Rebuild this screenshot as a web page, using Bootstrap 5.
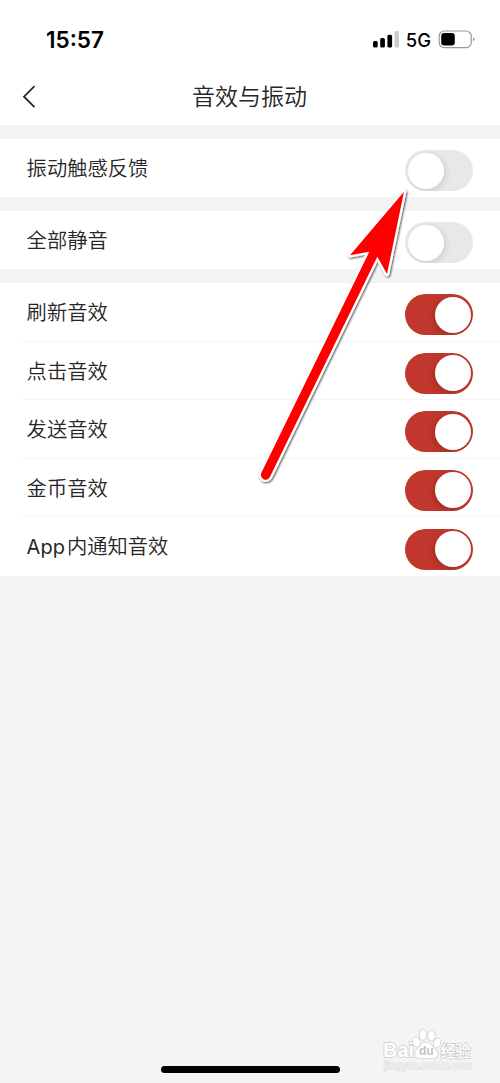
<!DOCTYPE html>
<html lang="zh-CN">
<head>
<meta charset="utf-8">
<meta name="viewport" content="width=device-width, initial-scale=1">
<title>音效与振动</title>
<link href="https://cdn.jsdelivr.net/npm/bootstrap@5.3.0/dist/css/bootstrap.min.css" rel="stylesheet">
<style>
body{background:#f4f4f4;color:#262626;font-family:Inter,"Noto Sans CJK SC",sans-serif;}
.screen{width:500px;height:1083px;overflow:hidden;}
.statusbar{height:67px;padding:26px 25px 0 46px;color:#000;}
.clock{font:600 22.5px/27px Inter,sans-serif;}
.network{font:500 18.5px/27px Inter,sans-serif;margin:1px 7px 0 7px;}
.titlebar{height:58px;}
.titlebar h1{font:350 23px/56px "Noto Sans CJK SC",sans-serif;margin:0 1px 0 0;}
.back{left:22px;top:17px;}
.groups{gap:14px;padding-top:14px;}
.setting{height:58px;padding:0 27px;font-weight:350;font-size:20.3px;}
.multi .setting{height:58.6px;}
.multi .setting:not(:last-child){background:linear-gradient(#f6f6f6,#f6f6f6) 22px 100%/100% 1px no-repeat;}
.label-text{line-height:60px;margin-left:-.4px;}
.latin{font-weight:400;font-size:20px;margin-right:2px;}
.toggle{width:68px;height:41px;margin-top:11.2px;border-radius:21px;background:#e8e8e8;padding:2.5px;overflow:hidden;}
.toggle::before{content:"";width:36px;height:36px;border-radius:50%;background:#fff;box-shadow:2px 2px 6px rgba(0,0,0,.12);}
.toggle.on{background:#c2372d;justify-content:flex-end;}
.toggle.on::before{box-shadow:-2px 2px 6px rgba(0,0,0,.16);}
.pointer{left:240px;top:180px;}
.home{width:179px;height:7px;left:161px;top:1066px;background:#000;}
.watermark{left:378px;top:1024px;}
</style>
</head>
<body>
<main class="screen position-relative">
  <header class="bg-white">
    <div class="statusbar d-flex align-items-start">
      <span class="clock me-auto">15:57</span>
      <svg width="27" height="27" viewBox="0 0 27 27"><rect x="1" y="15" width="4.7" height="6.5" rx="1.5"/><rect x="8.2" y="12" width="4.7" height="9.5" rx="1.5"/><rect x="15.4" y="8.7" width="4.7" height="12.8" rx="1.5"/><rect x="22.5" y="5" width="4.5" height="16.5" rx="1.5" fill="#ccc"/></svg>
      <span class="network">5G</span>
      <svg width="37" height="27" viewBox="0 0 37 27"><rect x="1.2" y="5" width="32" height="16.6" rx="5" fill="none" stroke="#999" stroke-width="1.2"/><rect x="3.2" y="7" width="13.6" height="12.5" rx="3"/><path d="M35 11Q38 13.3 35 15.6Z" fill="#999"/></svg>
    </div>
    <div class="titlebar position-relative text-center">
      <svg class="back position-absolute" width="16" height="26" viewBox="0 0 16 26" fill="none" stroke="#262626" stroke-width="1.8"><path d="M12.5 2.2 2 12.7 12.5 23.2"/></svg>
      <h1>音效与振动</h1>
    </div>
  </header>
  <div class="groups d-flex flex-column">
    <section class="bg-white"><div class="setting d-flex justify-content-between"><span class="label-text">振动触感反馈</span><span class="toggle d-flex"></span></div></section>
    <section class="bg-white"><div class="setting d-flex justify-content-between"><span class="label-text">全部静音</span><span class="toggle d-flex"></span></div></section>
    <section class="multi bg-white">
      <div class="setting d-flex justify-content-between"><span class="label-text">刷新音效</span><span class="toggle on d-flex"></span></div>
      <div class="setting d-flex justify-content-between"><span class="label-text">点击音效</span><span class="toggle on d-flex"></span></div>
      <div class="setting d-flex justify-content-between"><span class="label-text">发送音效</span><span class="toggle on d-flex"></span></div>
      <div class="setting d-flex justify-content-between"><span class="label-text">金币音效</span><span class="toggle on d-flex"></span></div>
      <div class="setting d-flex justify-content-between"><span class="label-text"><span class="latin">App</span>内通知音效</span><span class="toggle on d-flex"></span></div>
    </section>
  </div>
  <svg class="pointer position-absolute" width="180" height="320" viewBox="0 0 180 320">
    <defs><filter id="shade" x="-20%" y="-20%" width="140%" height="140%"><feDropShadow dx="1" dy="1" stdDeviation="1" flood-color="#000" flood-opacity=".7"/></filter></defs>
    <path d="M164 11.7 110 75.3 129.3 71.7 21.4 292.8A4.7 4.7 0 0 0 29.9 297L137.3 76.7 147 94Z" fill="#f00" stroke="#fff" stroke-width="4.6" stroke-linejoin="round" paint-order="stroke" filter="url(#shade)"/>
  </svg>
  <svg class="watermark position-absolute" width="105" height="52" viewBox="0 0 105 52">
    <g fill="#fff" stroke="#cfcfcf" stroke-width="1.6" paint-order="stroke">
      <text x="5" y="33" font-family="Liberation Sans,sans-serif" font-size="20.5" font-weight="700" textLength="31" lengthAdjust="spacingAndGlyphs">Bai</text>
      <ellipse cx="38.5" cy="18" rx="3.4" ry="4.6" transform="rotate(-15 38.5 18)"/><ellipse cx="45" cy="11" rx="3.4" ry="4.9"/><ellipse cx="53.5" cy="11.5" rx="3.4" ry="4.9"/><ellipse cx="59" cy="19" rx="3.2" ry="4.6" transform="rotate(20 59 19)"/>
      <path d="M48 18.5C43 18.5 43 22 39.5 25C35 29 37 34 42 34H55C61 34 61 28 57 25C53 21 53 18.5 48 18.5Z"/>
      <text x="62.5" y="32.5" font-family="Noto Sans CJK SC,sans-serif" font-size="15.5" font-weight="500" textLength="30">经验</text>
      <text x="6" y="45" font-family="Liberation Sans,sans-serif" font-size="10" font-weight="700" textLength="88" fill="#f1f1f1" stroke="#dcdcdc" stroke-width="1">jingyan.baidu.com</text>
    </g>
    <text x="41" y="31" font-family="Liberation Sans,sans-serif" font-size="12" font-weight="700" fill="#c4c4c4">du</text>
  </svg>
  <div class="home position-absolute rounded-pill"></div>
</main>
<script src="https://cdn.jsdelivr.net/npm/bootstrap@5.3.0/dist/js/bootstrap.bundle.min.js"></script>
</body>
</html>
